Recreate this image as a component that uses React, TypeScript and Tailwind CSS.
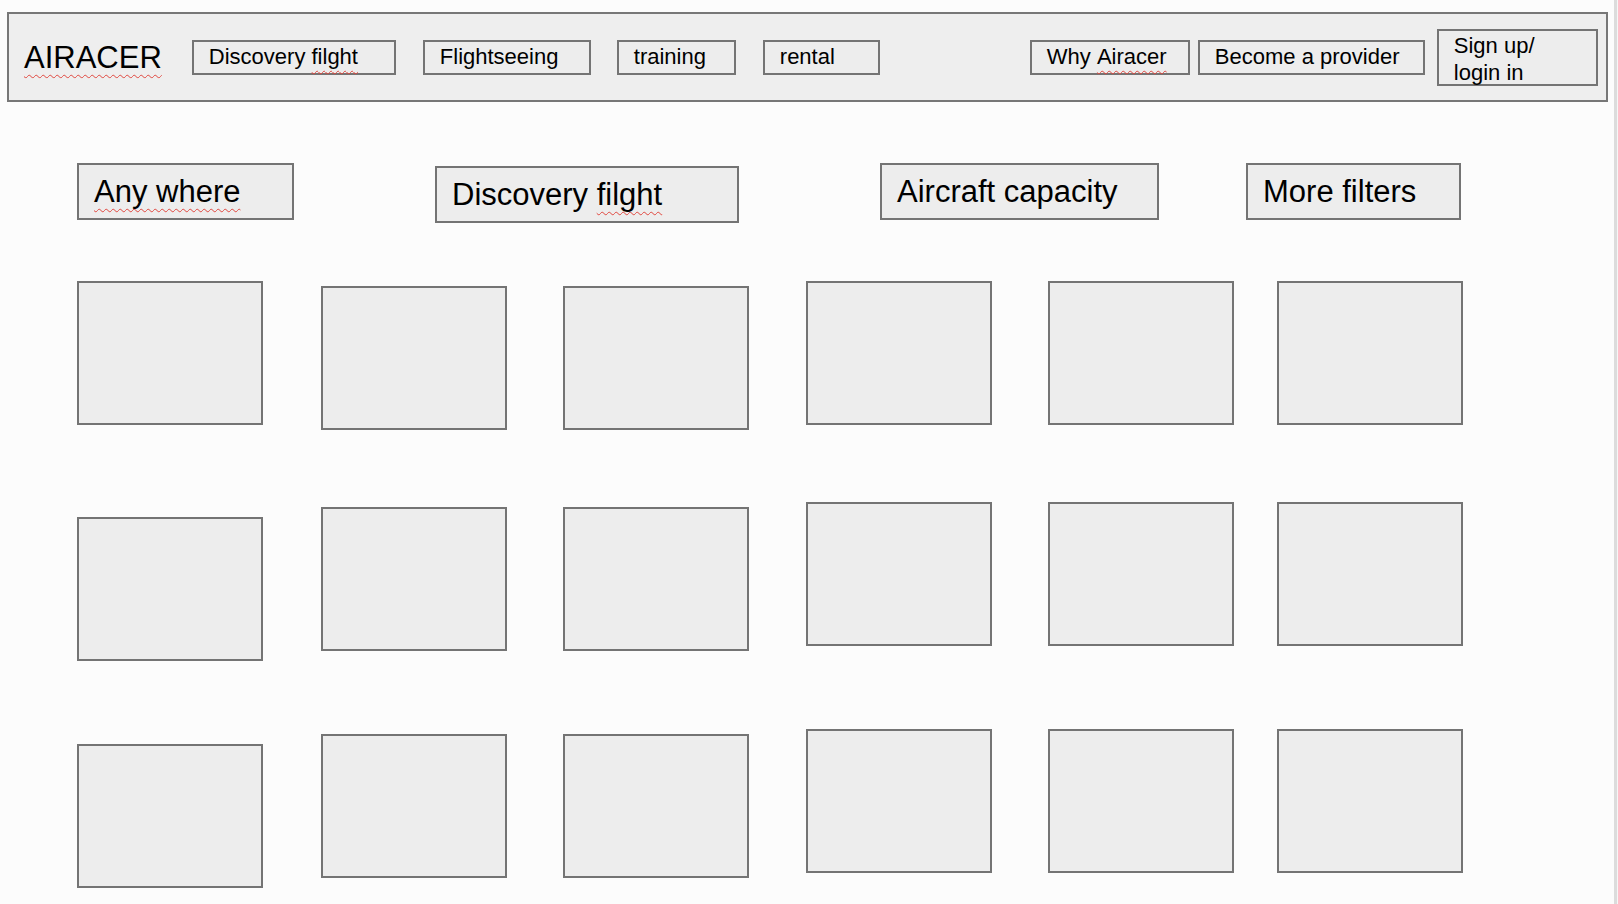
const navLinks = [
  { label: 'Discovery\u00a0', typo: 'filght', w: 'w-[204px]', ml: 'ml-[30px]' },
  { label: 'Flightseeing', w: 'w-[168px]', ml: 'ml-[27px]' },
  { label: 'training', w: 'w-[119px]', ml: 'ml-[26px]' },
  { label: 'rental', w: 'w-[117px]', ml: 'ml-[27px]' },
];

// each column: left gap, top offset and gaps between the three cards
const columns = [
  { ml: 'ml-0', mt: 'mt-0', gaps: ['mt-[92px]', 'mt-[83px]'] },
  { ml: 'ml-[58px]', mt: 'mt-[5px]', gaps: ['mt-[77px]', 'mt-[83px]'] },
  { ml: 'ml-[56px]', mt: 'mt-[5px]', gaps: ['mt-[77px]', 'mt-[83px]'] },
  { ml: 'ml-[57px]', mt: 'mt-0', gaps: ['mt-[77px]', 'mt-[83px]'] },
  { ml: 'ml-[56px]', mt: 'mt-0', gaps: ['mt-[77px]', 'mt-[83px]'] },
  { ml: 'ml-[43px]', mt: 'mt-0', gaps: ['mt-[77px]', 'mt-[83px]'] },
];

const squiggle = 'underline decoration-wavy decoration-[#e0473f] decoration-1 underline-offset-[6px]';
const boxClass = 'border-2 border-[#747474] bg-[#ededed]';

function NavButton({ children, className = '' }: { children: React.ReactNode; className?: string }) {
  return (
    <div className={`${boxClass} h-[35px] flex items-center pl-[15px] text-[22px] leading-none shrink-0 ${className}`}>
      {children}
    </div>
  );
}

function FilterButton({ children, className = '' }: { children: React.ReactNode; className?: string }) {
  return (
    <div className={`${boxClass} h-[57px] flex items-center pl-[15px] text-[31px] leading-none shrink-0 ${className}`}>
      {children}
    </div>
  );
}

function Card({ className = '' }: { className?: string }) {
  return <div className={`${boxClass} w-[186px] h-[144px] ${className}`} />;
}

export default function App() {
  return (
    <div className="min-h-screen h-[904px] overflow-hidden flex bg-[#fcfcfc] text-black font-['Liberation_Sans',Arial,sans-serif]">
      <div className="flex-1 flex flex-col">

        <header className="ml-[7px] mt-[12px] w-[1601px] h-[90px] border-2 border-[#777] bg-[#eeeeee] flex items-center">
          <span className={`ml-[15px] text-[31px] leading-none ${squiggle}`}>AIRACER</span>
          {navLinks.map(link => (
            <NavButton key={link.label} className={`${link.w} ${link.ml}`}>
              {link.label}
              {link.typo && <span className={squiggle}>{link.typo}</span>}
            </NavButton>
          ))}
          <NavButton className="w-[160px] ml-[150px]">
            Why&nbsp;<span className={squiggle}>Airacer</span>
          </NavButton>
          <NavButton className="w-[227px] ml-[8px]">Become a provider</NavButton>
          <div className={`${boxClass} w-[161px] h-[57px] ml-[12px] pl-[15px] pt-px text-[22px] leading-[27px] shrink-0`}>
            Sign up/<br />login in
          </div>
        </header>

        <div className="ml-[77px] mt-[61px] flex items-start">
          <FilterButton className="w-[217px]">
            <span className={squiggle}>Any where</span>
          </FilterButton>
          <FilterButton className="w-[304px] ml-[141px] mt-[3px]">
            Discovery&nbsp;<span className={squiggle}>filght</span>
          </FilterButton>
          <FilterButton className="w-[279px] ml-[141px]">Aircraft capacity</FilterButton>
          <FilterButton className="w-[215px] ml-[87px]">More filters</FilterButton>
        </div>

        <div className="ml-[77px] mt-[58px] flex items-start">
          {columns.map((col, i) => (
            <div key={i} className={`flex flex-col ${col.ml} ${col.mt}`}>
              <Card />
              <Card className={col.gaps[0]} />
              <Card className={col.gaps[1]} />
            </div>
          ))}
        </div>

      </div>
      <div className="w-[4px] shrink-0 border-l-[3px] border-[#dcdcdc] bg-[#f6f6f6]" />
    </div>
  );
}
